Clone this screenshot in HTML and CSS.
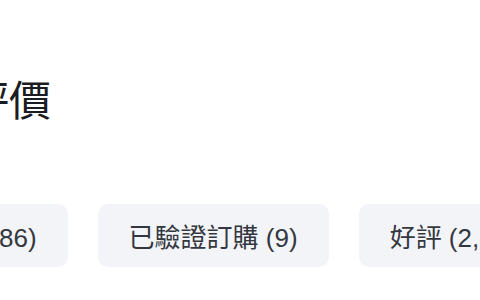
FILE: index.html
```html
<!DOCTYPE html>
<html lang="zh-Hant">
<head>
<meta charset="utf-8">
<link rel="stylesheet" href="styles.css">
</head>
<body>
<main class="page">
  <h1 class="title">顧客評價</h1>
  <div class="chips">
    <button class="chip">全部 (2,886)</button>
    <button class="chip">已驗證訂購 (9)</button>
    <button class="chip">好評 (2,801)</button>
  </div>
</main>
</body>
</html>
```
FILE: styles.css
```css
html, body {
  margin: 0;
  padding: 0;
  background: #ffffff;
  overflow: hidden;
}
body {
  font-family: "Liberation Sans", "Noto Sans CJK TC", sans-serif;
  width: 480px;
  height: 300px;
}
.page {
  padding-top: 77px;
}
.title {
  margin: 0 0 0 -117px;
  font-size: 42px;
  line-height: 50px;
  font-weight: 400;
  color: #1a1d22;
  white-space: nowrap;
}
.chips {
  display: flex;
  gap: 30px;
  margin: 77px 0 0 -136px;
}
.chip {
  flex-shrink: 0;
  height: 63px;
  padding: 0 31px;
  border: none;
  border-radius: 10px;
  background: #f3f4f8;
  color: #333840;
  font-family: inherit;
  font-size: 26px;
  white-space: nowrap;
}
```
